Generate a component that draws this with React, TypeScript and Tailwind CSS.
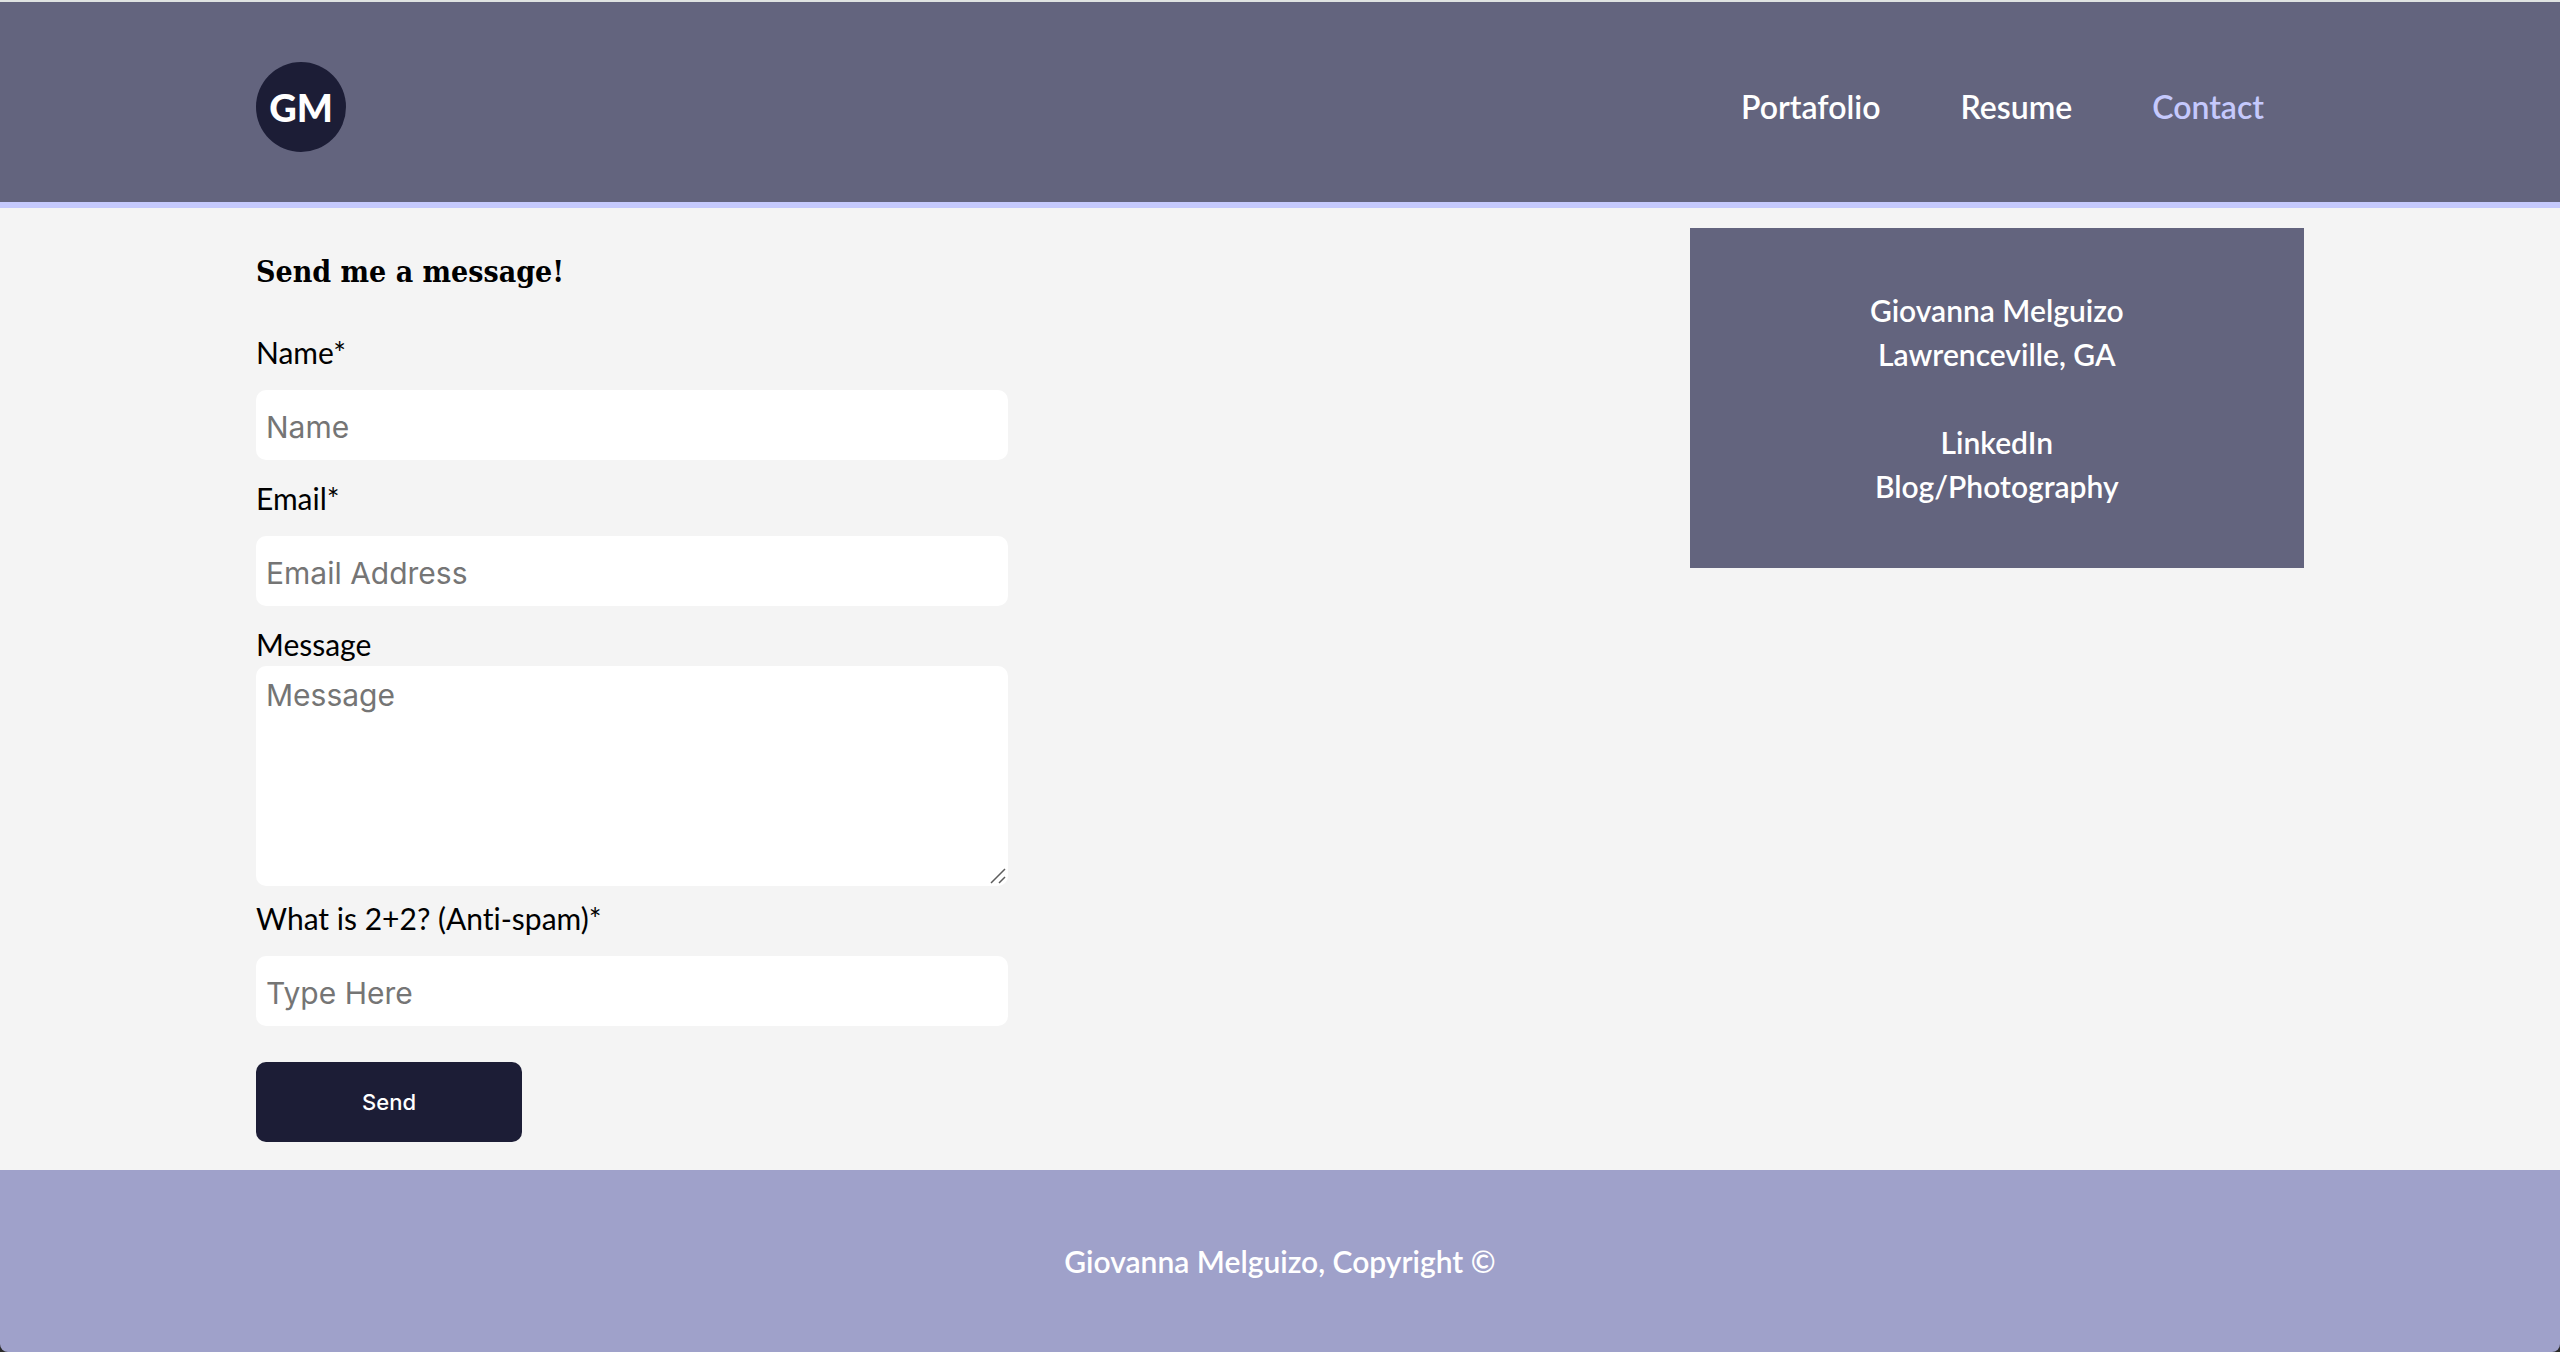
import React from "react";

const navLinks = [
  { label: "Portafolio", color: "text-white" },
  { label: "Resume", color: "text-white" },
  { label: "Contact", color: "text-[#c5c9fd]" },
];

const inputClass =
  "block h-[70px] w-full rounded-[10px] bg-white px-[10px] pt-1 font-['Inter',sans-serif] text-[30px] text-black placeholder:text-[#757575]";

function Field({ id, label, placeholder, type = "text" }: { id: string; label: string; placeholder: string; type?: string }) {
  return (
    <div className="flex flex-col gap-[18px]">
      <label htmlFor={id} className="leading-[40px]">{label}</label>
      <input id={id} type={type} placeholder={placeholder} className={inputClass} />
    </div>
  );
}

function Logo() {
  return (
    <a
      href="#home"
      className="flex size-[90px] items-center justify-center rounded-full bg-[#1c1d36] font-['Lato',sans-serif] text-[38px] leading-none font-black text-white"
    >
      GM
    </a>
  );
}

export default function App() {
  return (
    <div className="flex min-h-screen flex-col bg-[#2b2b2b] font-['Lato',sans-serif] text-[30px] text-black [font-variant-ligatures:none]">
      <header className="flex items-center justify-between border-t-2 border-b-6 border-t-[#dfe3e2] border-b-[#c5c9fd] bg-[#63647e] px-[10%] pt-[60px] pb-[50px]">
        <Logo />
        <nav className="flex text-[32px] font-semibold">
          {navLinks.map((link) => (
            <a key={link.label} href={`#${link.label.toLowerCase()}`} className={`px-10 ${link.color}`}>
              {link.label}
            </a>
          ))}
        </nav>
      </header>

      <main className="flex flex-1 items-start justify-between gap-10 bg-[#f4f4f4] px-[10%] pb-7">
        <form className="w-[752px] max-w-full pt-10" onSubmit={(e) => e.preventDefault()}>
          <h1 className="mb-9 font-['DejaVu_Serif_Condensed','DejaVu_Serif',serif] text-[30px] leading-[48px] font-bold">
            Send me a message!
          </h1>
          <div className="flex flex-col gap-[18px]">
            <Field id="name" label="Name*" placeholder="Name" />
            <Field id="email" label="Email*" placeholder="Email Address" type="email" />
            <div className="flex flex-col gap-0.5">
              <label htmlFor="message" className="leading-[40px]">Message</label>
              <div className="relative">
                <textarea
                  id="message"
                  placeholder="Message"
                  className="block h-[220px] w-full resize rounded-[10px] bg-white px-[10px] py-2 font-['Inter',sans-serif] text-[30px] leading-[42px] text-black placeholder:text-[#757575] [&::-webkit-resizer]:hidden"
                />
                <svg
                  className="pointer-events-none absolute right-0.5 bottom-0.5 size-4"
                  viewBox="0 0 16 16"
                  fill="none"
                  stroke="#5c5c5c"
                  strokeWidth="1.5"
                  aria-hidden="true"
                >
                  <path d="M1 15 15 1M9 15 15 9" />
                </svg>
              </div>
            </div>
          </div>
          <div className="mt-3">
            <Field id="antispam" label="What is 2+2? (Anti-spam)*" placeholder="Type Here" />
          </div>
          <button
            type="submit"
            className="mt-9 block h-20 w-[266px] rounded-[10px] bg-[#1c1d36] font-['Inter',sans-serif] text-[22px] font-medium text-white"
          >
            Send
          </button>
        </form>

        <aside className="mt-5 w-[30%] bg-[#63647e] py-[60px] text-center leading-[44px] font-semibold text-white">
          <p>Giovanna Melguizo</p>
          <p>Lawrenceville, GA</p>
          <p className="mt-11">
            <a href="#linkedin">LinkedIn</a>
          </p>
          <p>
            <a href="#blog">Blog/Photography</a>
          </p>
        </aside>
      </main>

      <footer>
        <p className="rounded-b-lg bg-[#9fa1ca] py-[70px] text-center leading-[42px] font-semibold text-white">
          Giovanna Melguizo, Copyright ©
        </p>
      </footer>
    </div>
  );
}
